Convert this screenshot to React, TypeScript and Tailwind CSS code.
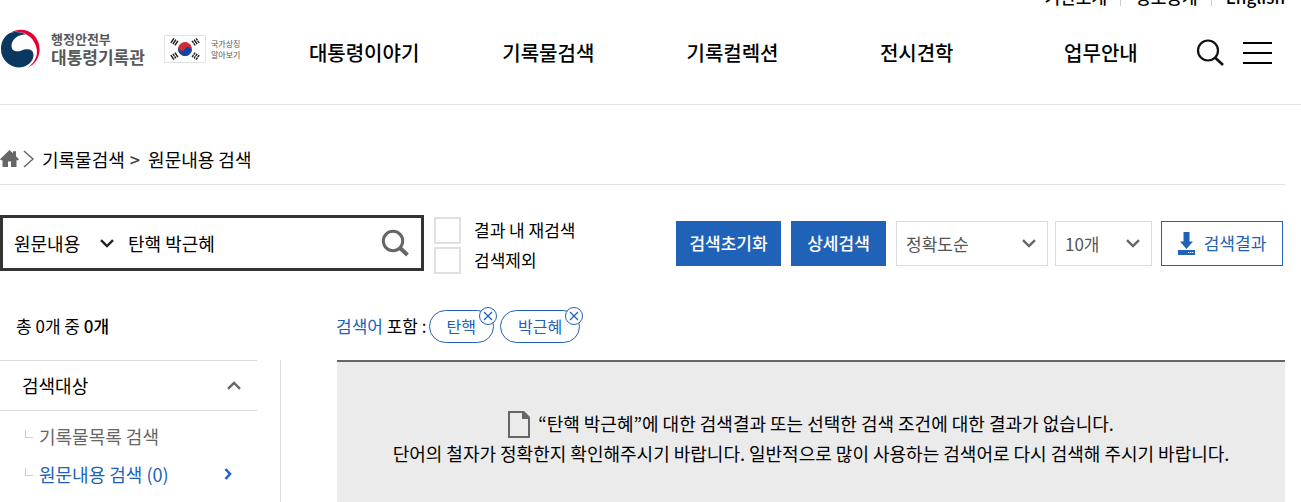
import type { ReactNode } from 'react';

const utilityLinks = ['기관소개', '정보공개', 'English'];
const menu = ['대통령이야기', '기록물검색', '기록컬렉션', '전시견학', '업무안내'];

function Chevron({ className = '' }: { className?: string }) {
  return (
    <svg viewBox="0 0 14 9" className={`h-[9px] w-[14px] ${className}`} fill="none" stroke="currentColor" strokeWidth="2.4" aria-hidden="true">
      <path d="M1 1.2 7 7l6-5.8" />
    </svg>
  );
}

function GovernmentEmblem() {
  return (
    <svg viewBox="0 0 40 40" className="size-10 shrink-0" aria-hidden="true">
      <path d="M9 4.500C14 2.300 21 2.500 26 5.500 18 5 11.500 10.500 11.500 17 11.500 22 16.500 23.500 21.500 21.500 26 19.500 33.500 19.500 33.500 26 33.500 32.500 27 38.500 18.500 38.500A18.500 18.500 0 0 1 1 20C1 13 4 7.500 9 4.500Z" fill="#0b3861" />
      <path d="M11 3.200C18-1 28 0 34 6 43 15.500 41.500 33 27 39.200 33.500 34.500 37.800 28 36.800 20.500 35 8.500 24 .5 11 3.200Z" fill="#e60032" />
    </svg>
  );
}

function Flag() {
  return (
    <svg viewBox="0 0 42 28" className="h-7 w-[42px] shrink-0" aria-hidden="true">
      <rect x=".5" y=".5" width="41" height="27" fill="#fff" stroke="#e3e3e3" />
      <g transform="rotate(30 21 14)">
        <circle cx="21" cy="14" r="7" fill="#cd2e3a" />
        <path d="M14 14a3.500 3.500 0 0 0 7 0 3.500 3.500 0 0 1 7 0 7 7 0 0 1-14 0Z" fill="#0d47a1" />
      </g>
      <g stroke="#222" strokeWidth="1.500">
        <path d="m6.900 7.800 3-4.500M8.900 9.100l3-4.500M10.900 10.400l3-4.500" />
        <path d="m35.100 20.200-3 4.500M33.100 18.900l-3 4.500M31.100 17.600l-3 4.500" strokeDasharray="2.400 .6" />
        <path d="m6.900 20.200 3 4.500M10.900 17.600l3 4.500" />
        <path d="m8.900 18.900 3 4.500" strokeDasharray="2.400 .6" />
        <path d="m35.100 7.800-3-4.500M31.100 10.400l-3-4.500" strokeDasharray="2.400 .6" />
        <path d="m33.100 9.100-3-4.500" />
      </g>
    </svg>
  );
}

function Header() {
  return (
    <header className="flex h-[105px] flex-col border-b border-[#e3e3e3]">
      <ul className="-mt-[15px] flex h-6 shrink-0 items-center justify-end pr-4 text-[17px] font-medium">
        {utilityLinks.map((label, i) => (
          <li key={label} className="flex items-center">
            {i > 0 && <span className="mr-[14px] ml-[13px] h-[18px] w-px bg-[#ccc]" />}
            <a href="#">{label}</a>
          </li>
        ))}
      </ul>
      <div className="flex h-[88px] items-center">
        <div className="flex w-[272px] shrink-0 items-center pb-2">
          <a href="#" className="flex items-center gap-[11px] text-[#58595b]">
            <GovernmentEmblem />
            <span className="flex w-[95px] flex-col whitespace-nowrap font-bold">
              <span className="text-[13px] leading-4">행정안전부</span>
              <span className="text-[17px] leading-5">대통령기록관</span>
            </span>
          </a>
          <a href="#" className="ml-[18px] flex items-center gap-[5px] text-[8px] leading-[11px] text-[#555]">
            <Flag />
            <span>국가상징<br />알아보기</span>
          </a>
        </div>
        <nav className="grid flex-1 grid-cols-5 text-center text-xl font-medium">
          {menu.map((label) => (
            <a key={label} href="#">{label}</a>
          ))}
        </nav>
        <div className="flex w-[108px] shrink-0 items-center gap-[19px] pr-7 pl-[3px]">
          <button type="button" aria-label="검색" className="size-7 shrink-0">
            <svg viewBox="0 0 28 28" fill="none" stroke="#111" strokeWidth="2.200" className="size-7">
              <circle cx="12" cy="11.500" r="10" />
              <path d="m19 18.500 8 7.500" strokeWidth="2.600" />
            </svg>
          </button>
          <button type="button" aria-label="전체메뉴" className="flex w-[29px] shrink-0 flex-col gap-2">
            <span className="h-[2px] bg-black" />
            <span className="h-[2px] bg-black" />
            <span className="h-[2px] bg-black" />
          </button>
        </div>
      </div>
    </header>
  );
}

function Breadcrumb() {
  return (
    <nav className="mr-4 flex h-20 items-center border-b border-[#e0e0e0] pt-7 text-lg">
      <a href="#" aria-label="홈">
        <svg viewBox="0 0 19 17" className="h-[17px] w-[19px]" fill="#666" aria-hidden="true">
          <path d="M9.500 0 13 3.300V1.200h3v5L19 9.200l-1 1.100h-1.500V17H11v-5.500H8V17H2.500v-6.700H1L0 9.200Z" />
        </svg>
      </a>
      <svg viewBox="0 0 11 18" className="mr-2 ml-1 h-[18px] w-[11px]" fill="none" stroke="#666" strokeWidth="1.500" aria-hidden="true">
        <path d="m1 1 9 8-9 8" />
      </svg>
      <a href="#">기록물검색</a>
      <span className="mx-[5px] font-medium text-[#444]">&gt;</span>
      <a href="#" className="ml-[3px]">원문내용 검색</a>
    </nav>
  );
}

function CheckRow({ id, label }: { id: string; label: string }) {
  return (
    <div className="flex items-center gap-[13px]">
      <input id={id} type="checkbox" className="size-[27px] appearance-none border-2 border-[#e0e0e0] checked:bg-[#2062b8]" />
      <label htmlFor={id} className="pb-[2px] text-[17px] leading-6">{label}</label>
    </div>
  );
}

function Dropdown({ label, value, className }: { label: string; value: string; className: string }) {
  return (
    <div className={`grid h-[45px] items-center border border-[#ddd] text-[#555] ${className}`}>
      <select aria-label={label} className="col-start-1 row-start-1 h-full w-full appearance-none bg-transparent pl-[9px] text-[17px] outline-none">
        <option>{value}</option>
      </select>
      <Chevron className="pointer-events-none col-start-1 row-start-1 mr-[11px] justify-self-end text-[#666]" />
    </div>
  );
}

function SearchBar() {
  return (
    <form className="mt-[30px] mr-[18px] flex items-start" onSubmit={(e) => e.preventDefault()}>
      <div className="flex h-14 w-[424px] items-center border-3 border-[#333]">
        <div className="grid w-[111px] shrink-0 items-center">
          <select aria-label="검색 범위" className="col-start-1 row-start-1 h-[50px] appearance-none bg-transparent pb-px pl-[11px] text-lg outline-none">
            <option>원문내용</option>
          </select>
          <Chevron className="pointer-events-none col-start-1 row-start-1 justify-self-end text-[#222]" />
        </div>
        <input aria-label="검색어" defaultValue="탄핵 박근혜" className="ml-[14px] h-[50px] min-w-0 flex-1 pb-px text-lg outline-none" />
        <button type="submit" aria-label="검색" className="mr-3">
          <svg viewBox="0 0 28 28" className="size-7" fill="none" stroke="#666" aria-hidden="true">
            <circle cx="12" cy="12" r="9.700" strokeWidth="3" />
            <path d="m19 19 7.500 7" strokeWidth="4" />
          </svg>
        </button>
      </div>
      <div className="mt-[2px] ml-[10px] flex flex-col gap-[3px]">
        <CheckRow id="within" label="결과 내 재검색" />
        <CheckRow id="exclude" label="검색제외" />
      </div>
      <div className="mt-[6px] ml-auto flex">
        <button type="reset" className="h-[45px] w-[105px] bg-[#2062b8] pb-[2px] text-[17px] font-medium text-white">검색초기화</button>
        <button type="button" className="ml-[10px] h-[45px] w-[95px] bg-[#2062b8] pb-[2px] text-[17px] font-medium text-white">상세검색</button>
        <Dropdown label="정렬" value="정확도순" className="ml-[10px] w-[152px]" />
        <Dropdown label="표시 개수" value="10개" className="ml-[7px] w-[97px]" />
        <button type="button" className="ml-[9px] flex h-[45px] w-[122px] items-center justify-center gap-[9px] border border-[#2062b8] pb-px text-[17px] text-[#2062b8]">
          <svg viewBox="0 0 17 23" className="h-[23px] w-[17px]" fill="#2062b8" aria-hidden="true">
            <path d="M5.500 0h6v9.500H15L8.500 17 2 9.500h3.500ZM0 18h17v5H0Z" />
            <path d="M10 20.500h1.200m.9 0h1.200m.9 0h1.200" stroke="#fff" />
          </svg>
          검색결과
        </button>
      </div>
    </form>
  );
}

function Tag({ children }: { children: string }) {
  return (
    <span className="relative flex h-[33px] items-center rounded-full border border-[#2062b8] px-[17px] pb-[2px] text-base text-[#2062b8]">
      {children}
      <button type="button" aria-label={`${children} 삭제`} className="absolute -top-1 -right-1">
        <svg viewBox="0 0 18 18" className="size-[18px]" fill="#fff" stroke="#2062b8" aria-hidden="true">
          <circle cx="9" cy="9" r="8.500" />
          <path d="m5 5 8 8m0-8-8 8" strokeWidth="1.300" />
        </svg>
      </button>
    </span>
  );
}

function TreeItem({ children, active = false }: { children: ReactNode; active?: boolean }) {
  return (
    <li className={`flex h-[38px] items-center pr-[25px] pl-[25px] text-lg ${active ? 'text-[#2062b8]' : 'text-[#666]'}`}>
      <span className="mr-[6px] mb-1 h-2 w-2 border-b border-l border-[#ccc]" />
      <a href="#" className="flex-1">{children}</a>
      {active && (
        <svg viewBox="0 0 8 12" className="h-3 w-2" fill="none" stroke="#2062d0" strokeWidth="2.600" aria-hidden="true">
          <path d="m1.500 1 4.500 5-4.500 5" />
        </svg>
      )}
    </li>
  );
}

function Sidebar() {
  return (
    <aside className="w-[281px] shrink-0 border-r border-[#ddd]">
      <div className="mr-[23px]">
        <h2 className="border-y border-[#ddd] text-lg">
          <button type="button" className="flex h-[49px] w-full items-center justify-between pr-4 pb-px pl-[22px]">
            검색대상
            <Chevron className="rotate-180 text-[#666]" />
          </button>
        </h2>
        <ul className="pt-[6px]">
          <TreeItem>기록물목록 검색</TreeItem>
          <TreeItem active>원문내용 검색 (0)</TreeItem>
        </ul>
      </div>
    </aside>
  );
}

export default function App() {
  return (
    <div className="flex min-h-screen flex-col overflow-hidden bg-white font-['Noto_Sans_CJK_KR',sans-serif] text-black">
      <Header />
      <Breadcrumb />
      <SearchBar />
      <div className="mt-9 flex h-[33px] items-center text-[17px]">
        <p className="w-[336px] shrink-0 pb-[2px] pl-4">총 0개 중 <span className="font-medium">0개</span></p>
        <p className="pb-[2px]"><span className="text-[#2062b8]">검색어</span> 포함 :</p>
        <div className="ml-[2px] flex gap-[6px]">
          <Tag>탄핵</Tag>
          <Tag>박근혜</Tag>
        </div>
      </div>
      <div className="mt-[17px] flex flex-1">
        <Sidebar />
        <main className="mr-4 ml-14 flex-1 border-t-2 border-[#666] bg-[#ebebeb] pt-[46px] pb-4 text-center text-lg leading-[30px]">
          <p className="flex items-center justify-center gap-2">
            <svg viewBox="0 0 22 27" className="mt-[3px] h-[27px] w-[22px]" aria-hidden="true">
              <path d="M1 1h14l6 6v19H1Z" fill="none" stroke="#666" strokeWidth="2" />
              <path d="M14 0h2l6 6v2h-8Z" fill="#666" />
            </svg>
            “탄핵 박근혜”에 대한 검색결과 또는 선택한 검색 조건에 대한 결과가 없습니다.
          </p>
          <p>단어의 철자가 정확한지 확인해주시기 바랍니다. 일반적으로 많이 사용하는 검색어로 다시 검색해 주시기 바랍니다.</p>
        </main>
      </div>
    </div>
  );
}
